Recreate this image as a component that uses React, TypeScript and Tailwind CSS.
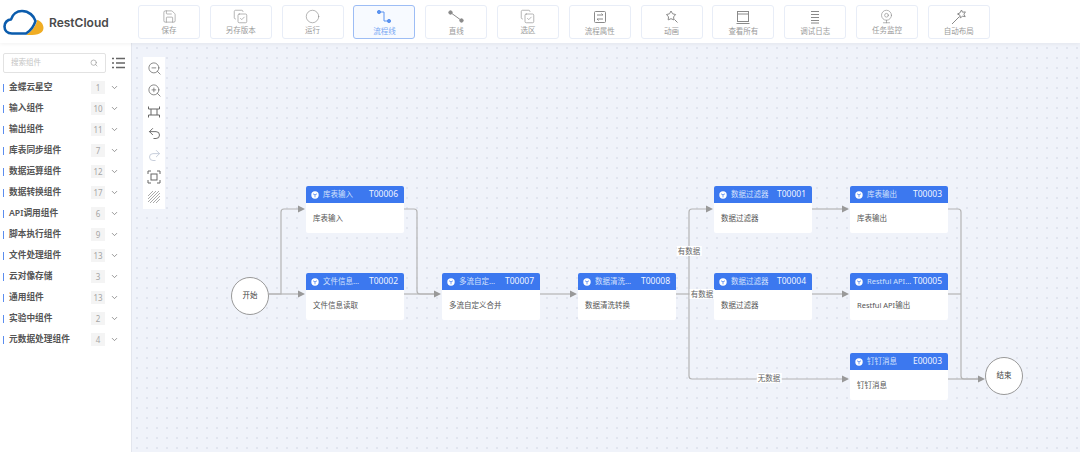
import { ChevronDown, Circle, CopyCheck, Redo2, Save, Search, Undo2, Webcam, ZoomIn, ZoomOut } from 'lucide-react'
import type { ReactNode } from 'react'

const cjk = "font-['Noto_Sans','Noto_Sans_CJK_SC',sans-serif]"

const svgProps = { width: 16, height: 16, viewBox: '0 0 16 16', fill: 'none', stroke: 'currentColor', strokeWidth: 1 }

const tools: { label: string; icon: ReactNode; active?: boolean }[] = [
  { label: '保存', icon: <Save size={15} strokeWidth={1} /> },
  { label: '另存版本', icon: <CopyCheck size={15} strokeWidth={1} /> },
  { label: '运行', icon: <Circle size={15} strokeWidth={1} /> },
  {
    label: '流程线',
    active: true,
    icon: (
      <svg {...svgProps}>
        <path d="M3 3h5v9h5" />
        <circle cx="3" cy="3" r="1.600" fill="currentColor" />
        <circle cx="13" cy="12" r="1.600" fill="currentColor" />
      </svg>
    ),
  },
  {
    label: '直线',
    icon: (
      <svg {...svgProps}>
        <path d="M2.500 3.500l11 8" />
        <circle cx="2.500" cy="3.500" r="1.700" fill="currentColor" />
        <circle cx="13.500" cy="11.500" r="1.700" fill="currentColor" />
      </svg>
    ),
  },
  { label: '选区', icon: <CopyCheck size={15} strokeWidth={1} /> },
  {
    label: '流程属性',
    icon: (
      <svg {...svgProps}>
        <rect x="2.500" y="2.500" width="11" height="11" rx="1" />
        <path d="M5 6h6M9.500 4.500L11 6M5 10h6M6.500 11.500L5 10" />
      </svg>
    ),
  },
  {
    label: '动画',
    icon: (
      <svg {...svgProps}>
        <path d="M7 2l1.600 2.800 3 .7-2 2.400.3 3-2.900-1.200-2.800 1.200.3-3-2-2.400 3-.7z" />
        <path d="M10.500 10.500l3 3" />
      </svg>
    ),
  },
  {
    label: '查看所有',
    icon: (
      <svg {...svgProps}>
        <rect x="2.500" y="2.500" width="11" height="10" />
        <path d="M2.500 5h11M1.500 14.500h13" />
      </svg>
    ),
  },
  {
    label: '调试日志',
    icon: (
      <svg {...svgProps}>
        <path d="M4 2.500h8M4 5.500h8M4 8.500h8M4 11.500h8M4 14h8" />
      </svg>
    ),
  },
  { label: '任务监控', icon: <Webcam size={15} strokeWidth={1} /> },
  {
    label: '自动布局',
    icon: (
      <svg {...svgProps}>
        <path d="M1 15l7.500-7.500" />
        <path d="M10.500 1l1 2.200 2.900-.3-1.500 2.300 1.300 2.500-2.800-.6-2 2-.4-2.800-2.500-1.300 2.500-1.200z" />
      </svg>
    ),
  },
]

const groups: [string, number][] = [
  ['金蝶云星空', 1],
  ['输入组件', 10],
  ['输出组件', 11],
  ['库表同步组件', 7],
  ['数据运算组件', 12],
  ['数据转换组件', 17],
  ['API调用组件', 6],
  ['脚本执行组件', 9],
  ['文件处理组件', 13],
  ['云对像存储', 3],
  ['通用组件', 13],
  ['实验中组件', 2],
  ['元数据处理组件', 4],
]

// node positions are page coordinates, minus the canvas offset below
const nodes = [
  { x: 306, y: 186, title: '库表输入', code: 'T00006', body: '库表输入' },
  { x: 306, y: 273, title: '文件信息...', code: 'T00002', body: '文件信息读取' },
  { x: 442, y: 273, title: '多流自定...', code: 'T00007', body: '多流自定义合并' },
  { x: 578, y: 273, title: '数据清洗...', code: 'T00008', body: '数据清洗转换' },
  { x: 714, y: 186, title: '数据过滤器', code: 'T00001', body: '数据过滤器' },
  { x: 714, y: 273, title: '数据过滤器', code: 'T00004', body: '数据过滤器' },
  { x: 850, y: 186, title: '库表输出', code: 'T00003', body: '库表输出' },
  { x: 850, y: 273, title: 'Restful API...', code: 'T00005', body: 'Restful API输出' },
  { x: 850, y: 353, title: '钉钉消息', code: 'E00003', body: '钉钉消息' },
]

const edges = [
  'M269 294H281V212Q281 209 284 209H298',
  'M269 294H298',
  'M404 209H414Q417 209 417 212V291Q417 294 420 294H434',
  'M404 294H434',
  'M540 294H570',
  'M676 294H706',
  'M689 294V212Q689 209 692 209H706',
  'M689 294V376Q689 379 692 379H842',
  'M812 209H842',
  'M812 294H842',
  'M948 209H958Q961 209 961 212V376Q961 379 964 379H978',
  'M948 294H961',
  'M948 379H978',
]

const arrows: [number, number][] = [
  [298, 209],
  [298, 294],
  [434, 294],
  [570, 294],
  [706, 209],
  [842, 209],
  [842, 294],
  [842, 379],
  [978, 379],
]

function Logo() {
  return (
    <svg width="43" height="28" viewBox="0 0 43 28" fill="none">
      <path d="M24 27C32 27 41.500 27 41.500 20C41.500 16 38.500 12.500 35 12C34.500 17 30 23 24 27Z" fill="#f0ad24" />
      <path
        d="M10 25.500C5 25.500 2.500 22 2.500 18.500C2.500 14.500 5.500 11.500 9 11.500C10.500 6 15 3 20 3C27 3 32 8 33.500 13C32 18 28 23 24 25.500Z"
        stroke="#0b5cad"
        strokeWidth="2.600"
        strokeLinejoin="round"
      />
    </svg>
  )
}

function ToolButton({ label, icon, active }: { label: string; icon: ReactNode; active?: boolean }) {
  return (
    <button
      className={`flex h-[34px] w-[62px] flex-col items-center justify-start rounded-[3px] border pt-[3px] text-[7.500px] leading-[10px] ${
        active ? 'border-[#9dbdf5] bg-[#f7faff] text-[#7aa8f3]' : 'border-[#e8edf7] bg-white text-[#9a9a9a]'
      }`}
    >
      <span className={active ? 'text-[#5b93f0]' : 'text-[#8a8a8a]'}>{icon}</span>
      <span className="mt-[1px]">{label}</span>
    </button>
  )
}

function Sidebar() {
  return (
    <aside className="flex w-[132px] shrink-0 flex-col border-r border-[#e3e6ee] bg-white pl-[3px] pt-[10px]">
      <div className="flex items-center">
        <div className="flex h-[20px] w-[103px] items-center justify-between rounded-[2px] border border-[#e2e2e2] pl-[7px] pr-[7px] text-[7.500px] text-[#c4c4c4]">
          <span>搜索组件</span>
          <Search size={8} className="text-[#999]" />
        </div>
        <svg width="13" height="12" viewBox="0 0 13 12" className="ml-[6px] text-[#666]" fill="none" stroke="currentColor" strokeWidth="1.500">
          <path d="M0 1.500h2M4 1.500h9M0 6h2M4 6h9M0 10.500h2M4 10.500h9" />
        </svg>
      </div>
      <ul className="mt-[4px]">
        {groups.map(([name, count]) => (
          <li key={name} className="flex h-[21px] items-center">
            <span className="h-[8px] w-[1px] bg-[#5b8def]" />
            <span className="ml-[5px] w-[82px] whitespace-nowrap pt-[1px] text-[8.700px] font-semibold text-[#555]">{name}</span>
            <span className="flex h-[13px] w-[14px] items-center justify-center bg-[#f4f4f4] text-[8px] text-[#a5a5a5]">{count}</span>
            <ChevronDown size={9} strokeWidth={2} className="ml-[5px] text-[#777]" />
          </li>
        ))}
      </ul>
    </aside>
  )
}

function ZoomPanel() {
  return (
    <div className="absolute left-[11px] top-[14px] flex h-[152px] w-[22px] flex-col items-center justify-around bg-white py-[1px] text-[#666]">
      <ZoomOut size={15} strokeWidth={1.200} />
      <ZoomIn size={15} strokeWidth={1.200} />
      <svg width="14" height="14" viewBox="0 0 14 14" fill="none" stroke="currentColor">
        <path d="M4 4h6v6H4zM4 4H1.500V1.500M10 4h2.500V1.500M4 10H1.500v2.500M10 10h2.500v2.500" />
      </svg>
      <Undo2 size={15} strokeWidth={1.500} />
      <Redo2 size={15} strokeWidth={1.500} className="text-[#c3cbd9]" />
      <svg width="14" height="14" viewBox="0 0 14 14" fill="none" stroke="currentColor">
        <path d="M1 4V1h3M10 1h3v3M1 10v3h3M10 13h3v-3" />
        <rect x="4" y="4" width="6" height="6" />
      </svg>
      <svg width="14" height="14" viewBox="0 0 14 14" fill="none" stroke="#aaa">
        <path d="M1 6l5-5M1 9l8-8M1 12l11-11M3 13l10-10M6 13l7-7M9 13l4-4" />
      </svg>
    </div>
  )
}

function FlowNode({ x, y, title, code, body }: (typeof nodes)[number]) {
  return (
    <div style={{ left: x - 132, top: y - 43 }} className="absolute h-[47px] w-[98px] rounded-[2px] bg-white">
      <div className="flex h-[17px] items-center justify-between rounded-t-[2px] bg-[#3c78ef] pl-[5px] pr-[6px] text-white">
        <span className="flex items-center whitespace-nowrap text-[7.500px] text-[#d3e1fc]">
          <svg width="8" height="8" viewBox="0 0 8 8" className="mr-[4px]">
            <circle cx="4" cy="4" r="3.700" fill="#fff" />
            <path d="M2 2.800L4 3.800 6 2.800M4 3.800V6.300" stroke="#3c78ef" strokeWidth=".7" fill="none" />
          </svg>
          {title}
        </span>
        <span className="text-[8.500px] leading-none text-[#f0f5ff]">{code}</span>
      </div>
      <p className="pl-[7px] pt-[8px] text-[7.500px] leading-[14px] text-[#555]">{body}</p>
    </div>
  )
}

function Terminal({ x, y, text }: { x: number; y: number; text: string }) {
  return (
    <div
      style={{ left: x - 132 - 19, top: y - 43 - 19 }}
      className="absolute flex h-[38px] w-[38px] items-center justify-center rounded-full border border-[#999] bg-white text-[7.500px] text-[#444]"
    >
      {text}
    </div>
  )
}

function EdgeLabel({ x, y, text }: { x: number; y: number; text: string }) {
  return (
    <span
      style={{ left: x - 132, top: y - 43 }}
      className="absolute -translate-x-1/2 -translate-y-1/2 whitespace-nowrap bg-white px-[1px] text-[7.500px] leading-[10px] text-[#666]"
    >
      {text}
    </span>
  )
}

export default function App() {
  return (
    <div className={`flex h-[452px] w-[1080px] flex-col overflow-hidden bg-white ${cjk}`}>
      <header className="relative z-10 flex h-[43px] shrink-0 items-center bg-white shadow-[0_1px_4px_rgba(0,0,0,0.06)]">
        <div className="flex w-[138px] shrink-0 items-center pl-[2px]">
          <Logo />
          <span className="ml-[4px] mt-[3px] font-['Inter',sans-serif] text-[12px] font-semibold text-[#4a4a4a]">RestCloud</span>
        </div>
        <div className="flex gap-[9.800px]">
          {tools.map((t) => (
            <ToolButton key={t.label} {...t} />
          ))}
        </div>
      </header>
      <div className="flex min-h-0 flex-1">
        <Sidebar />
        <main className="relative flex-1 overflow-hidden bg-[#f0f3fa] bg-[radial-gradient(#e0e4ee_0.7px,transparent_0.8px)] bg-[size:10px_10px]">
          <svg className="absolute inset-0" width="948" height="409" viewBox="132 43 948 409" fill="none">
            {edges.map((d) => (
              <path key={d} d={d} stroke="#b4b4b4" strokeWidth="1.200" />
            ))}
            {arrows.map(([x, y]) => (
              <path key={`${x}-${y}`} d={`M${x} ${y - 3.500}L${x + 7} ${y}L${x} ${y + 3.500}Z`} fill="#999" />
            ))}
          </svg>
          <ZoomPanel />
          {nodes.map((n) => (
            <FlowNode key={n.code} {...n} />
          ))}
          <Terminal x={250} y={296} text="开始" />
          <Terminal x={1004} y={376} text="结束" />
          <EdgeLabel x={689} y={251} text="有数据" />
          <EdgeLabel x={702} y={294} text="有数据" />
          <EdgeLabel x={769} y={378} text="无数据" />
        </main>
      </div>
    </div>
  )
}
